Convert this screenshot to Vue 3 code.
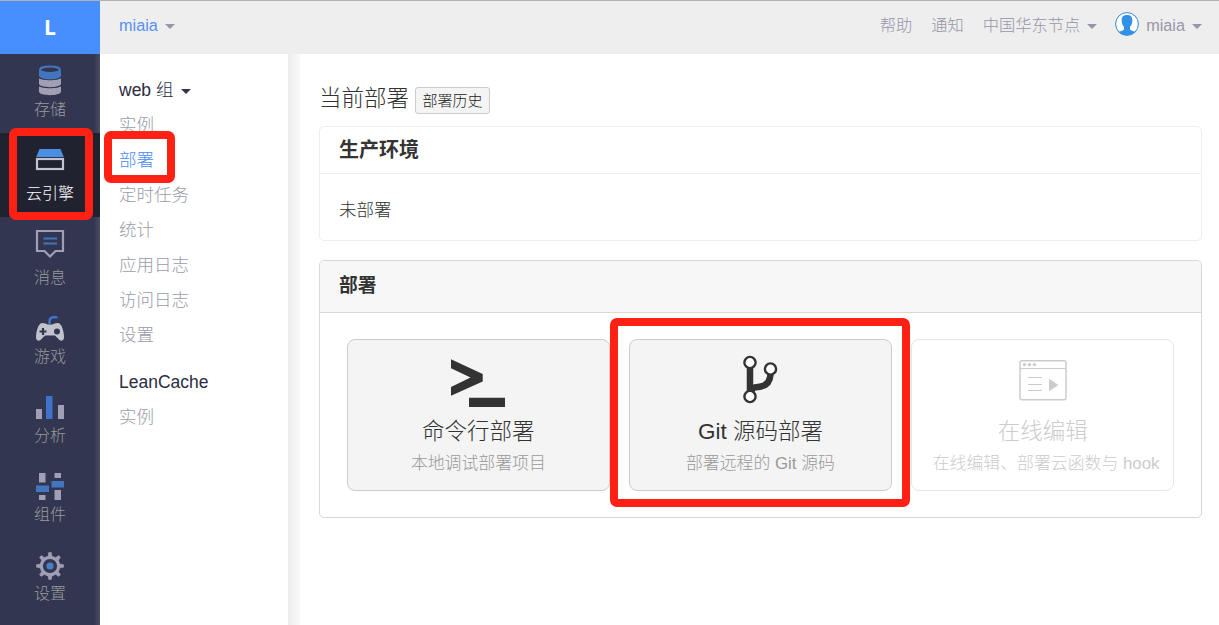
<script setup>
const nav = [
  { id: 'storage', label: '存储', box: '32 62 36 36' },
  { id: 'engine', label: '云引擎', box: '32 141 36 41', tall: true, active: true },
  { id: 'message', label: '消息', box: '32 225 36 41', tall: true },
  { id: 'game', label: '游戏', box: '32 309 36 36' },
  { id: 'stats', label: '分析', box: '32 388 36 36' },
  { id: 'component', label: '组件', box: '32 467 36 36' },
  { id: 'settings', label: '设置', box: '32 546 36 36' }
]
const teeth = [0, 45, 90, 135, 180, 225, 270, 315]
const links = ['实例', '部署', '定时任务', '统计', '应用日志', '访问日志', '设置']
</script>

<template>
  <div class="page">
    <aside class="sidebar">
      <div class="logo">L</div>
      <a v-for="n in nav" :key="n.id" class="nav" :class="{ tall: n.tall, active: n.active }">
        <svg class="nav-icon" :viewBox="n.box">
          <g v-if="n.id === 'storage'">
            <path d="M39 86.300c3 2.600 19 2.600 22 0V92c-2 4.200-20 4.200-22 0z" fill="#a09fb5" />
            <path d="M39 78.300c3 2.600 19 2.600 22 0V84c-2 4.200-20 4.200-22 0z" fill="#a09fb5" />
            <path d="M39 70v6c2 4.500 20 4.500 22 0v-6z" fill="#4275bd" />
            <ellipse cx="50" cy="69.800" rx="10" ry="3.200" fill="#333650" stroke="#4275bd" stroke-width="2" />
          </g>
          <g v-else-if="n.id === 'engine'">
            <path d="M39.500 149h21l3.300 8h-27.600z" fill="#4a90e2" />
            <rect x="37" y="159" width="26" height="10" fill="none" stroke="#c4c3d2" stroke-width="2.200" />
          </g>
          <g v-else-if="n.id === 'message'" fill="none">
            <path d="M37 231h26v20h-7.500L50 256.500 44.500 251H37z" stroke="#a09fb5" stroke-width="2.200" />
            <path d="M43.500 238.500H57M43.500 243.500H57" stroke="#4275bd" stroke-width="2.200" />
          </g>
          <g v-else-if="n.id === 'game'">
            <path d="M49.500 324v-2.500q0-4 4-4.300h4" fill="none" stroke="#3f72cb" stroke-width="2.500" />
            <path d="M42 323q4 0 5.500 1.500h5Q54 323 58 323c4 .5 6 9 6 14.500 0 3-3 4.500-5.500 1.500l-3.500-3.500H45L41.500 339c-2.500 3-5.500 1.500-5.500-1.500 0-5.500 2-14 6-14.500z" fill="#c1c2cb" />
            <path d="M39.500 331.500h7M43 328v7" stroke="#333650" stroke-width="2.200" />
            <circle cx="57" cy="331.500" r="3" fill="#333650" />
          </g>
          <g v-else-if="n.id === 'stats'">
            <path d="M36 409h6v10h-6zM58 405h6v14h-6z" fill="#a09fb5" />
            <path d="M46 396h6.500v23H46z" fill="#3f72cb" />
          </g>
          <g v-else-if="n.id === 'component'">
            <path d="M39 473h6.500v9.500H39zM39 495h6.500v5H39zM54.500 473H61v5h-6.500zM54.500 490H61v10h-6.500z" fill="#a09fb5" />
            <path d="M36 485.500h13v6.500H36zM51.500 481H64v6.500H51.500z" fill="#4275bd" />
          </g>
          <g v-else>
            <circle cx="50" cy="566" r="8.700" fill="none" stroke="#a09fb5" stroke-width="3.200" />
            <path v-for="t in teeth" :key="t" d="M48.700 552.500h2.600l.7 4.500h-4z" fill="#a09fb5" stroke="#a09fb5" stroke-width=".6" :transform="`rotate(${t} 50 566)`" />
            <circle cx="50" cy="566" r="3.600" fill="#4a7fc6" />
          </g>
        </svg>
        <span>{{ n.label }}</span>
      </a>
    </aside>

    <div class="main">
      <header class="topbar">
        <span class="app">miaia<i class="caret"></i></span>
        <span class="help">帮助</span>
        <span class="notice">通知</span>
        <span class="node">中国华东节点<i class="caret"></i></span>
        <svg class="avatar" viewBox="0 0 24 24">
          <circle cx="12" cy="12" r="11.400" fill="#fff" stroke="#3089dc" stroke-width="1" />
          <path d="M12 3c4 0 5.700 2.200 5.300 6-.2 2.500-1 4.500-2.300 6v2.500c1.500 1.500 4 1.500 5.500 2.500-4.500 4.300-12.500 4.300-17 0 1.500-1 4-1 5.500-2.500V15C7.700 13.500 6.900 11.500 6.700 9 6.300 5.200 8 3 12 3z" fill="#3191e6" />
        </svg>
        <span class="user">miaia<i class="caret"></i></span>
      </header>

      <div class="body">
        <nav class="menu">
          <div class="group">web 组<i class="caret"></i></div>
          <a v-for="l in links" :key="l" :class="{ current: l === '部署' }">{{ l }}</a>
          <div class="group cache">LeanCache</div>
          <a>实例</a>
        </nav>

        <main class="content">
          <div class="heading">
            <h1>当前部署</h1>
            <button>部署历史</button>
          </div>
          <section class="panel env">
            <h2>生产环境</h2>
            <p>未部署</p>
          </section>
          <section class="panel deploy">
            <h2>部署</h2>
            <div class="cards">
              <div class="card">
                <svg viewBox="0 0 80 64">
                  <path d="M13 9.300 44.700 24v7.500L13 45.800v-8.900l19.500-9.300L13 18.200z" fill="#333" />
                  <path d="M31 47.800h36v9.200H31z" fill="#333" />
                </svg>
                <h3>命令行部署</h3>
                <p>本地调试部署项目</p>
              </div>
              <div class="card">
                <svg viewBox="0 0 80 64">
                  <path d="M30 17v26" stroke="#333" stroke-width="6.500" />
                  <path d="M31 43c1-7 5-5.500 10-6.500 6-1.200 9-5 9.500-12" fill="none" stroke="#333" stroke-width="6.500" />
                  <g fill="#fff" stroke="#333" stroke-width="2.400">
                    <circle cx="30" cy="12.500" r="5.600" />
                    <circle cx="50.500" cy="19" r="5.600" />
                    <circle cx="30" cy="46.500" r="5.600" />
                  </g>
                </svg>
                <h3>Git 源码部署</h3>
                <p>部署远程的 Git 源码</p>
              </div>
              <div class="card disabled">
                <svg viewBox="0 0 80 64">
                  <rect x="17" y="10.700" width="46" height="39" rx="2" fill="none" stroke="#ccc" stroke-width="1.500" />
                  <path d="M17 18.500h46M25 27.500h14M25 34.500h14M25 40.500h14" stroke="#ccc" stroke-width="1.200" />
                  <path d="M46.500 29.500v11l8.200-5.500z" fill="#ccc" stroke="#ccc" stroke-linejoin="round" />
                  <g fill="#ccc"><circle cx="21.500" cy="14.600" r="1.700" /><circle cx="26.500" cy="14.600" r="1.700" /><circle cx="31.500" cy="14.600" r="1.700" /></g>
                </svg>
                <h3>在线编辑</h3>
                <p>在线编辑、部署云函数与 hook</p>
              </div>
            </div>
          </section>
        </main>
      </div>
    </div>

    <div class="mark mark-nav"></div>
    <div class="mark mark-menu"></div>
    <div class="mark mark-card"></div>
  </div>
</template>

<style>
body { margin: 0; overflow: hidden; }
</style>

<style scoped>
* { box-sizing: border-box; }
h1, h2, h3, p { margin: 0; }
.page {
  position: relative; display: flex; width: 1219px; height: 625px; overflow: hidden;
  border-top: 1px solid #b2b2b2; background: #fff; color: #333; font-weight: 300;
  font-family: "Liberation Sans", "Noto Sans CJK SC", sans-serif;
}
.sidebar { flex: 0 0 100px; background: linear-gradient(90deg, #333650 94px, #4b4d64 100px); }
.logo {
  height: 53px; background: #478fff; color: #fff; text-align: center;
  font: bold 21px/53px "Open Sans", sans-serif;
}
.nav { display: flex; flex-direction: column; align-items: center; height: 79px; padding-top: 8px; color: #9a9a9c; font-size: 16px; line-height: 24px; }
.nav-icon { flex: none; width: 36px; height: 36px; }
.tall { height: 84px; }
.tall .nav-icon { height: 41px; }
.active { background: #212230; color: #fff; }
.main { flex: 1; min-width: 0; display: flex; flex-direction: column; }
.topbar { display: flex; height: 53px; padding: 0 17px 0 19px; background: #eee; color: #9796a9; font-size: 16.250px; line-height: 48px; white-space: nowrap; }
.caret { display: inline-block; width: 0; height: 0; margin-left: 7px; vertical-align: 2px; border: 5px solid transparent; border-top-color: #9796a9; border-bottom: 0; }
.app { color: #5790f5; }
.help { margin-left: auto; }
.notice { margin-left: 19px; }
.node { margin-left: 19px; }
.avatar { width: 24px; height: 24px; margin: 11px 7px 0 18px; }
.body { flex: 1; display: flex; }
.menu { flex: 0 0 188px; padding: 19px 19px; font-size: 17.500px; line-height: 35px; color: #9a9ca9; }
.menu a { display: block; }
.menu .current { color: #4a8bff; }
.group { color: #2b2d42; }
.group .caret { margin-left: 8px; border-top-color: #333650; }
.cache { margin-top: 12px; }
.content { flex: 1; padding: 27px 17px 0 31px; background: linear-gradient(90deg, #ededed 0, #fafafa 12px, #fff 12px); }
.heading { display: flex; height: 45px; }
h1 { font-size: 22.500px; line-height: 36px; font-weight: 300; }
button { width: 75px; height: 27px; margin: 6px 0 0 6px; padding: 0; border: 1px solid #ccc; border-radius: 3px; background: #f4f4f4; color: #222; font: inherit; font-size: 15px; line-height: 22px; }
.panel { border: 1px solid #eee; border-radius: 5px; background: #fff; }
.env { height: 115px; }
.panel h2 { padding-left: 19px; font-weight: 700; }
.env h2 { height: 47px; border-bottom: 1px solid #eee; font-size: 20px; line-height: 46px; }
.env p { padding-left: 19px; font-size: 17.500px; line-height: 72px; }
.deploy { height: 258px; margin-top: 19px; border-color: #d8d8d8; }
.deploy h2 { height: 52px; border-bottom: 1px solid #d8d8d8; border-radius: 5px 5px 0 0; background: #f7f7f7; font-size: 18.750px; line-height: 50px; }
.cards { display: grid; grid-template-columns: repeat(3, 1fr); gap: 19.500px; padding: 26px 27px; }
.card { height: 152px; border: 1px solid #ccc; border-radius: 8px; background: #f4f4f4; text-align: center; white-space: nowrap; }
.card svg { display: block; width: 80px; height: 64px; margin: 10px auto 0; }
.card h3 { font-size: 22.500px; line-height: 36px; font-weight: 300; }
.card p { font-size: 16.875px; line-height: 28px; color: #999; }
.disabled { border-color: #e6e6e6; background: #fff; }
.disabled h3, .disabled p { color: #ccc; }
.disabled p { padding-left: 7px; }
.mark { position: absolute; border: 8px solid #ff2113; border-radius: 7px; }
.mark-nav { left: 9px; top: 127px; width: 84px; height: 92px; }
.mark-menu { left: 104px; top: 130px; width: 71px; height: 52px; }
.mark-card { left: 610px; top: 317px; width: 300px; height: 189px; }
</style>
